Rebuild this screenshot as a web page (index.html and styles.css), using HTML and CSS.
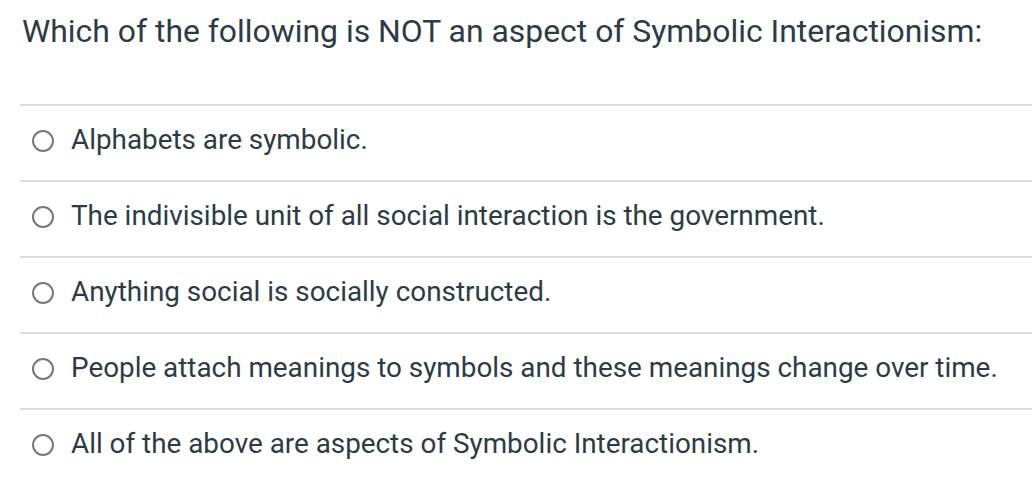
FILE: index.html
```html
<!DOCTYPE html>
<html>
<head>
<meta charset="utf-8">
<link rel="stylesheet" href="styles.css">
</head>
<body>
<div class="question">
  <h1 class="question-text">Which of the following is NOT an aspect of Symbolic Interactionism:</h1>
  <ul class="answers">
    <li class="answer"><span class="radio"></span><span class="label">Alphabets are symbolic.</span></li>
    <li class="answer"><span class="radio"></span><span class="label">The indivisible unit of all social interaction is the government.</span></li>
    <li class="answer"><span class="radio"></span><span class="label">Anything social is socially constructed.</span></li>
    <li class="answer"><span class="radio"></span><span class="label">People attach meanings to symbols and these meanings change over time.</span></li>
    <li class="answer"><span class="radio"></span><span class="label">All of the above are aspects of Symbolic Interactionism.</span></li>
  </ul>
</div>
</body>
</html>
```

FILE: styles.css
```css
html, body {
  margin: 0;
  padding: 0;
  background: #ffffff;
}
body {
  font-family: Roboto, "Liberation Sans", sans-serif;
  color: #2d3b45;
}
.question {
  padding-left: 20px;
}
.question-text {
  margin: 0;
  padding: 13px 0 0 2px;
  height: 104px;
  box-sizing: border-box;
  font-size: 31.9px;
  font-weight: 400;
  line-height: 36px;
}
.answers {
  list-style: none;
  margin: 0;
  padding: 0;
}
.answer {
  border-top: 2px solid #dcdcdc;
  height: 76px;
  box-sizing: border-box;
  display: flex;
  align-items: center;
  padding-left: 12px;
  padding-bottom: 6px;
}
.radio {
  width: 18px;
  height: 18px;
  border: 2px solid #787878;
  border-radius: 50%;
  flex: none;
  margin-top: 2px;
  margin-right: 17px;
}
.label {
  font-size: 27.85px;
  line-height: 32px;
}
```
